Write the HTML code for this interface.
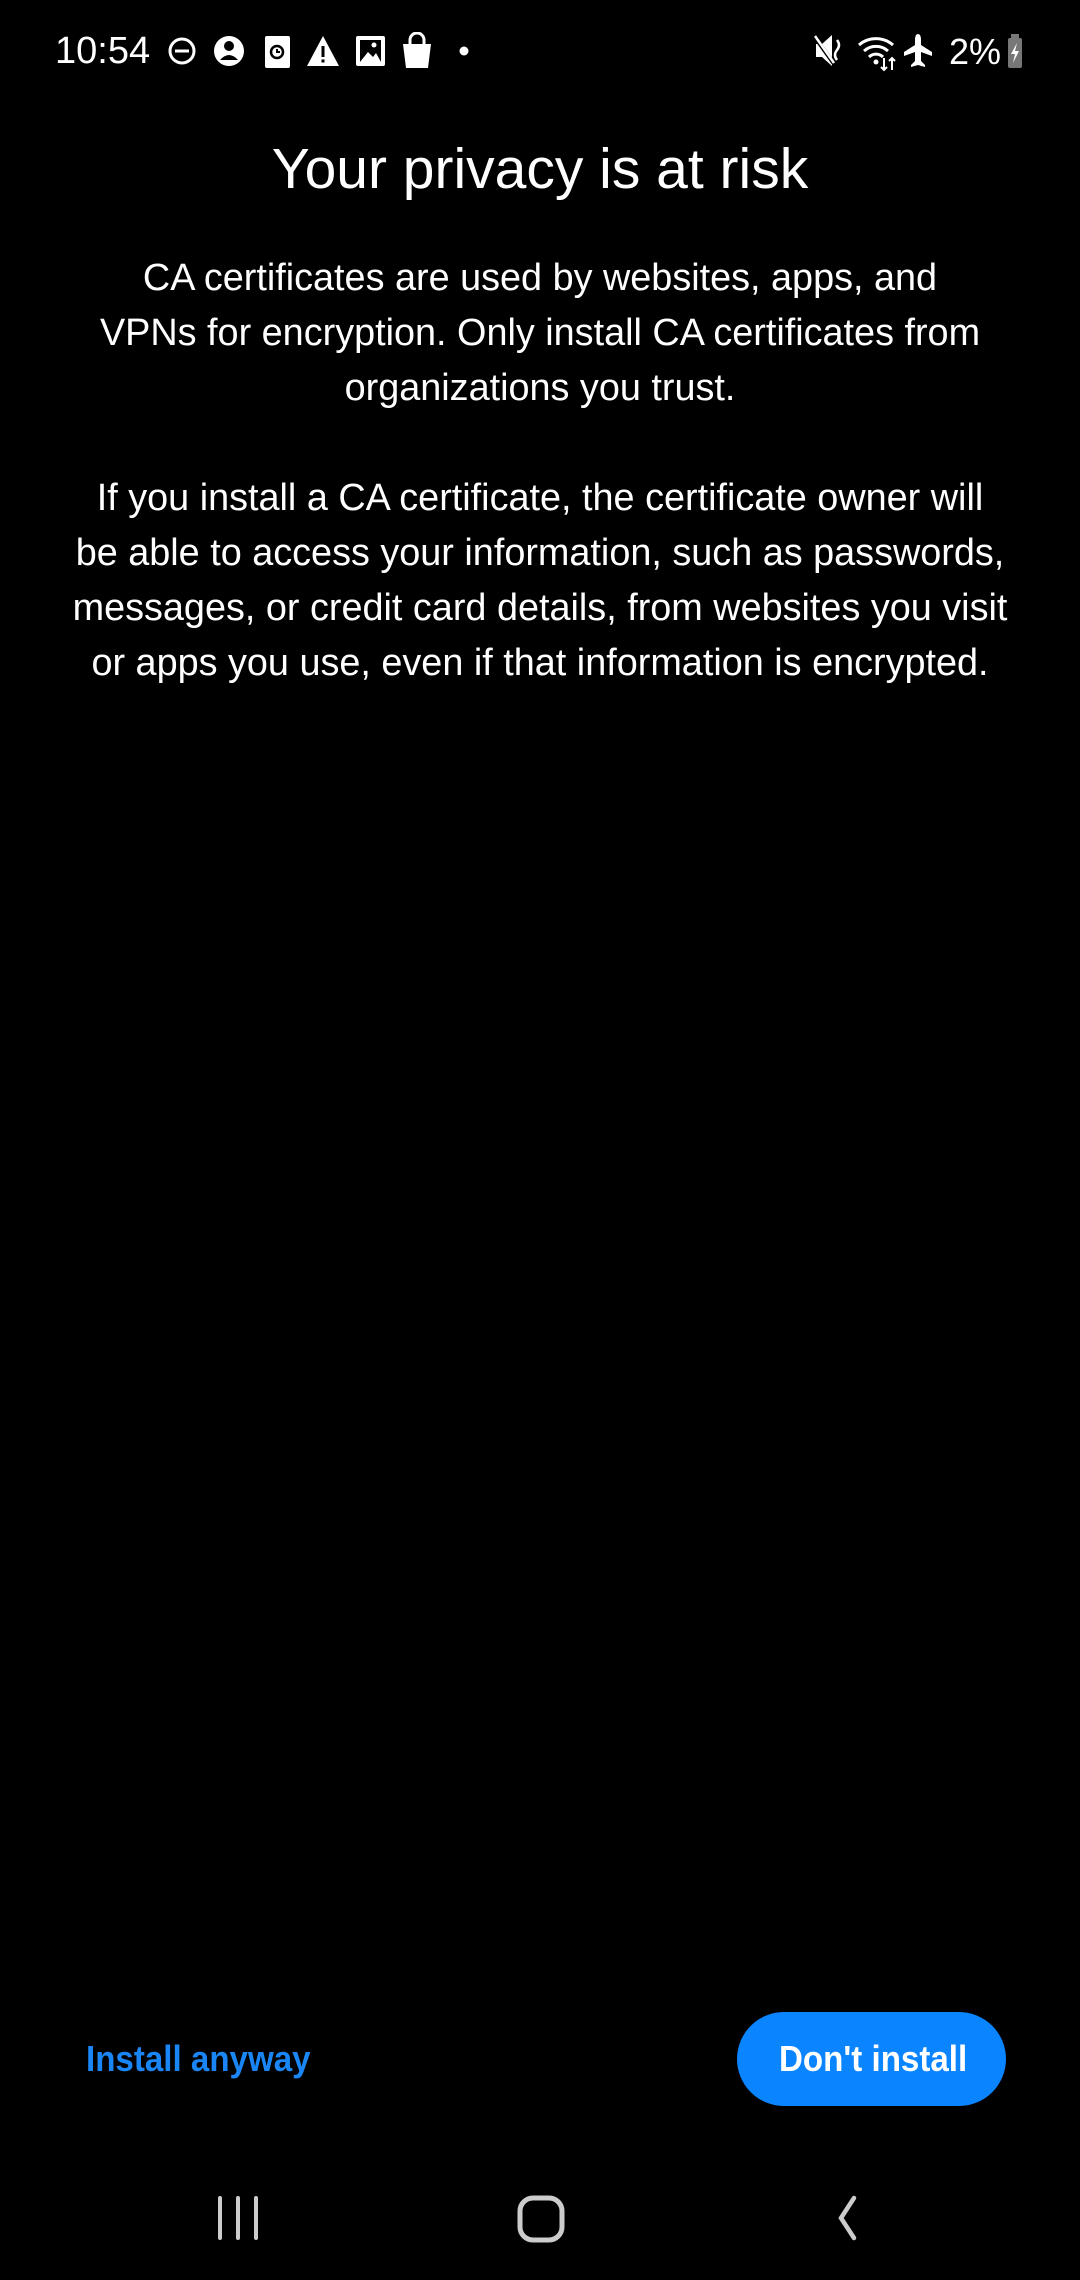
<!DOCTYPE html>
<html><head><meta charset="utf-8"><style>
html,body{margin:0;padding:0;background:#000;}
body{width:1080px;height:2280px;position:relative;overflow:hidden;font-family:"Liberation Sans",sans-serif;color:#fff;}
.abs{position:absolute;}
.title{left:0;width:1080px;top:135px;text-align:center;font-size:57px;line-height:68px;}
.p{left:0;width:1080px;text-align:center;font-size:37.8px;line-height:55px;}
.btn{left:737px;top:2012px;width:269px;height:94px;border-radius:47px;background:#0a84ff;}
.bt{font-weight:bold;font-size:36px;transform:scaleX(0.92);transform-origin:left center;white-space:nowrap;}
</style></head><body>
<div class="abs" style="left:55px;top:28px;font-size:38px;line-height:46px;">10:54</div>
<svg class="abs" style="left:165px;top:32px" width="320" height="40" viewBox="0 0 320 40">
<circle cx="17" cy="19" r="12" fill="none" stroke="#fff" stroke-width="3"/><rect x="10" y="17.5" width="14" height="3" fill="#fff"/>
<circle cx="64" cy="19" r="15" fill="#fff"/><circle cx="64" cy="14" r="5" fill="#000"/><path d="M55 28 Q64 18 73 28Z" fill="#000"/>
<rect x="100" y="4" width="25" height="32" rx="2" fill="#fff"/><circle cx="112" cy="20" r="6" fill="none" stroke="#000" stroke-width="2.5"/><path d="M112 17v3h3" stroke="#000" stroke-width="2" fill="none"/>
<path d="M158 4 L174 34 L142 34Z" fill="#fff"/><rect x="156.5" y="14" width="3" height="11" fill="#000"/><rect x="156.5" y="27.5" width="3" height="3" fill="#000"/>
<rect x="191" y="4" width="29" height="30" rx="2" fill="#fff"/><rect x="195" y="8" width="21" height="22" fill="#000"/><path d="M195 30 L203 20 L208 25 L211 21 L216 30Z" fill="#fff"/><circle cx="209" cy="13" r="2.5" fill="#fff"/>
<path d="M238 12 H266 L263 36 H241Z" fill="#fff"/><path d="M245 12 V8 a7 7 0 0 1 14 0 V12" stroke="#fff" stroke-width="3" fill="none"/>
<circle cx="299" cy="19" r="4.5" fill="#fff"/>
</svg>
<svg class="abs" style="left:812px;top:30px" width="220" height="42" viewBox="0 0 220 42">
<path d="M4 14 H10 L20 5 V36 L10 27 H4Z" fill="#fff"/><path d="M2 6 L22 34" stroke="#000" stroke-width="4"/><path d="M3 6 L22 33" stroke="#fff" stroke-width="2.5"/><path d="M25 10 q4 5 0 10 q-4 5 0 10" stroke="#fff" stroke-width="2.5" fill="none"/>
<path d="M47 15 a26 26 0 0 1 34 0" stroke="#fff" stroke-width="3" fill="none"/><path d="M52 21 a18 18 0 0 1 24 0" stroke="#fff" stroke-width="3" fill="none"/><path d="M57 27 a10 10 0 0 1 14 0" stroke="#fff" stroke-width="3" fill="none"/><circle cx="64" cy="32" r="2.5" fill="#fff"/><path d="M72 28v12M69 37l3 3 3-3M80 40V28M77 31l3-3 3 3" stroke="#fff" stroke-width="2" fill="none"/>
<path d="M106 4 q3 0 3 6 V15 L120 22 V26 L109 22 V31 L113 35 V37 L106 35 L99 37 V35 L103 31 V22 L92 26 V22 L103 15 V10 q0-6 3-6Z" fill="#fff"/>
<text x="137" y="34" font-family="Liberation Sans" font-size="36" fill="#fff">2%</text>
<rect x="196" y="8" width="14" height="30" rx="2" fill="#777"/><rect x="199" y="4" width="8" height="5" fill="#777"/><path d="M205 13 L199 24 H203 L201 33 L207 21 H203Z" fill="#fff"/>
</svg>
<div class="abs title">Your privacy is at risk</div>
<div class="abs p" style="top:251px;">CA certificates are used by websites, apps, and<br>VPNs for encryption. Only install CA certificates from<br>organizations you trust.</div>
<div class="abs p" style="top:471px;">If you install a CA certificate, the certificate owner will<br>be able to access your information, such as passwords,<br>messages, or credit card details, from websites you visit<br>or apps you use, even if that information is encrypted.</div>
<div class="abs bt" style="left:86px;top:2038px;color:#1a86f5;">Install anyway</div>
<div class="abs btn"></div>
<div class="abs bt" style="left:779px;top:2038px;color:#fff;">Don't install</div>
<svg class="abs" style="left:200px;top:2180px" width="700" height="80" viewBox="0 0 700 80">
<path d="M20 18v40M38 18v40M56 18v40" stroke="#ccc" stroke-width="4" stroke-linecap="round"/>
<rect x="320" y="18" width="42" height="42" rx="13" fill="none" stroke="#ccc" stroke-width="5"/>
<path d="M654 18 L641 38 L654 58" stroke="#ccc" stroke-width="4.5" fill="none" stroke-linecap="round"/>
</svg>
</body></html>
